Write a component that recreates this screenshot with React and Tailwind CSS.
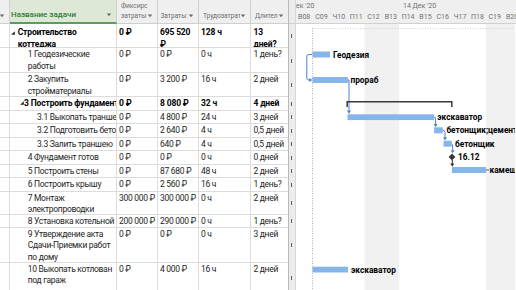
import React from "react";

const ROWS = [
  { h: "h-[24px]", pt: "pt-[3px]", bold: true, tri: "left-[1px] top-[6.5px]", ind: "pl-[7.7px]", name: ["Строительство", "коттеджа"], fixed: ["0 ₽"], cost: ["695 520", "₽"], work: ["128 ч"], dur: ["13", "дней?"] },
  { h: "h-[25px]", ind: "pl-[17.7px]", name: ["1 Геодезические", "работы"], fixed: ["0 ₽"], cost: ["0 ₽"], work: ["0 ч"], dur: ["1 день?"] },
  { h: "h-[24px]", ind: "pl-[17.7px]", name: ["2 Закупить", "стройматериалы"], fixed: ["0 ₽"], cost: ["3 200 ₽"], work: ["16 ч"], dur: ["2 дней"] },
  { h: "h-[13.5px]", bold: true, tri: "left-[10px] top-[4px]", ind: "pl-[14px]", name: ["3 Построить фундамент"], fixed: ["0 ₽"], cost: ["8 080 ₽"], work: ["32 ч"], dur: ["4 дней"] },
  { h: "h-[13.5px]", ind: "pl-[27px]", name: ["3.1 Выкопать траншею"], fixed: ["0 ₽"], cost: ["4 800 ₽"], work: ["24 ч"], dur: ["3 дней"] },
  { h: "h-[13.5px]", ind: "pl-[27px]", name: ["3.2 Подготовить бетона"], fixed: ["0 ₽"], cost: ["2 640 ₽"], work: ["4 ч"], dur: ["0,5 дней"] },
  { h: "h-[13.5px]", ind: "pl-[27px]", name: ["3.3 Залить траншею"], fixed: ["0 ₽"], cost: ["640 ₽"], work: ["4 ч"], dur: ["0,5 дней"] },
  { h: "h-[13.5px]", ind: "pl-[17.7px]", name: ["4 Фундамент готов"], fixed: ["0 ₽"], cost: ["0 ₽"], work: ["0 ч"], dur: ["0 дней"] },
  { h: "h-[13.5px]", ind: "pl-[17.7px]", name: ["5 Построить стены"], fixed: ["0 ₽"], cost: ["87 680 ₽"], work: ["48 ч"], dur: ["2 дней"] },
  { h: "h-[13.5px]", ind: "pl-[17.7px]", name: ["6 Построить крышу"], fixed: ["0 ₽"], cost: ["2 560 ₽"], work: ["16 ч"], dur: ["1 день?"] },
  { h: "h-[23px]", ind: "pl-[17.7px]", name: ["7 Монтаж", "электропроводки"], fixed: ["300 000 ₽"], cost: ["300 000 ₽"], work: ["0 ч"], dur: ["2 дней"] },
  { h: "h-[13px]", ind: "pl-[17.7px]", name: ["8 Установка котельной"], fixed: ["200 000 ₽"], cost: ["290 000 ₽"], work: ["0 ч"], dur: ["1 день?"] },
  { h: "h-[35px]", ind: "pl-[17.7px]", name: ["9 Утверждение акта", "Сдачи-Приемки работ", "по дому"], fixed: ["0 ₽"], cost: ["0 ₽"], work: ["0 ч"], dur: ["3 дней"] },
  { h: "h-[30px]", ind: "pl-[17.7px]", name: ["10 Выкопать котлован", "под гараж"], fixed: ["0 ₽"], cost: ["4 000 ₽"], work: ["16 ч"], dur: ["2 дней"] },
];

const DAYS = ["В08", "С09", "Ч10", "П11", "С12", "В13", "П14", "В15", "С16", "Ч17", "П18", "С19", "В20"];

function Arrow({ cls = "" }) {
  return (
    <svg width="6" height="4" viewBox="0 0 6 4" className={"flex-none " + cls}>
      <polygon points="0.8,0.6 5.2,0.6 3,3.2" fill="#6b6b6b" />
    </svg>
  );
}

function Lines({ lines }) {
  return lines.map((l, i) => (
    <div key={i} className="whitespace-nowrap">
      {l}
    </div>
  ));
}

function Cell({ w, children, extra = "" }) {
  return (
    <div className={"flex-none border-r border-[#dcdcdc] overflow-hidden " + w + " " + extra}>{children}</div>
  );
}

function Table() {
  return (
    <div className="w-[289px] flex-none flex flex-col border-r border-[#b9b9b9]">
      <div className="flex h-[24px] flex-none bg-[#efefef] text-[#707070] text-[6.7px] tracking-[-0.1px] leading-[9.4px]">
        <div className="w-[10px] flex-none border-r border-b border-[#cfcfcf] flex items-end pb-[5px]">
          <Arrow cls="-ml-[1px]" />
        </div>
        <div className="w-[107px] flex-none bg-[#dde8d6] border-r border-[#cfcfcf] border-b-2 border-b-[#5a9e5a] flex items-end pb-[2px] pl-[1px] pr-[4px]">
          <div className="flex-1 text-[#2f7a31] text-[8px] tracking-normal font-medium leading-[10px] whitespace-nowrap overflow-hidden">Название задачи</div>
          <Arrow cls="mb-[3px]" />
        </div>
        <div className="w-[41px] flex-none border-r border-b border-[#cfcfcf] flex flex-col justify-end pb-[2px] pl-[4px] pr-[4px] overflow-hidden">
          <div className="whitespace-nowrap">Фиксирс</div>
          <div className="flex items-center">
            <div className="flex-1 whitespace-nowrap overflow-hidden">затраты</div>
            <Arrow />
          </div>
        </div>
        <div className="w-[41px] flex-none border-r border-b border-[#cfcfcf] flex items-end pb-[2px] pl-[2.5px] pr-[4px] overflow-hidden">
          <div className="flex-1 flex items-center min-w-0">
            <div className="flex-1 whitespace-nowrap overflow-hidden">Затраты</div>
            <Arrow />
          </div>
        </div>
        <div className="w-[52px] flex-none border-r border-b border-[#cfcfcf] flex items-end pb-[2px] pl-[4px] pr-[4px] overflow-hidden">
          <div className="flex-1 flex items-center min-w-0">
            <div className="flex-1 whitespace-nowrap overflow-hidden">Трудозатраты</div>
            <Arrow />
          </div>
        </div>
        <div className="flex-1 border-b border-[#cfcfcf] flex items-end pb-[2px] pl-[4px] pr-[4px] overflow-hidden">
          <div className="flex-1 flex items-center min-w-0">
            <div className="flex-1 whitespace-nowrap overflow-hidden">Длител</div>
            <Arrow />
          </div>
        </div>
      </div>
      {ROWS.map((r, i) => (
        <div
          key={i}
          className={
            "flex flex-none border-b border-[#dcdcdc] text-[8.5px] leading-[11.5px] " +
            r.h +
            (r.bold ? " font-bold text-black tracking-[-0.15px]" : " text-[#1e1e1e] tracking-[-0.3px]")
          }
        >
          <Cell w="w-[10px]" />
          <Cell w="w-[107px]" extra={"relative " + r.ind + " " + (r.pt || "pt-[1px]")}>
            {r.tri && (
              <svg width="4" height="4" viewBox="0 0 4 4" className={"absolute " + r.tri}>
                <polygon points="3.8,0.2 3.8,3.8 0.2,3.8" fill="#222" />
              </svg>
            )}
            <Lines lines={r.name} />
          </Cell>
          <Cell w="w-[41px]" extra={"pl-[2px] " + (r.pt || "pt-[1px]")}>
            <Lines lines={r.fixed} />
          </Cell>
          <Cell w="w-[41px]" extra={"pl-[2px] " + (r.pt || "pt-[1px]")}>
            <Lines lines={r.cost} />
          </Cell>
          <Cell w="w-[52px]" extra={"pl-[2px] " + (r.pt || "pt-[1px]")}>
            <Lines lines={r.work} />
          </Cell>
          <div className={"flex-1 overflow-hidden pl-[2.5px] " + (r.pt || "pt-[1px]")}>
            <Lines lines={r.dur} />
          </div>
        </div>
      ))}
    </div>
  );
}

function Splitter() {
  return (
    <div className="w-[7px] flex-none flex flex-col bg-[#ececec] border-r border-[#d6d6d6]">
      <div className="h-[24px] flex-none border-b border-[#d0d0d0]" />
      {ROWS.map((r, i) => (
        <div key={i} className={"flex-none flex items-center " + r.h}>
          <div className="ml-[1.5px] w-[1.5px] h-[4px] bg-[#5c5c5c]" />
        </div>
      ))}
    </div>
  );
}

const BAR = "#86b5ea";
const LINE = "#4b80d2";

function Chart() {
  const lbl = "font-bold text-[8.3px] fill-black";
  return (
    <div className="flex-1 flex flex-col overflow-hidden bg-white">
      <div className="h-[24px] flex-none bg-[#efefef] border-b border-[#d0d0d0] text-[#6f6f6f] text-[7px] leading-[9px] overflow-hidden">
        <div className="flex h-[11px] items-end whitespace-nowrap">
          <div className="w-[103.5px] flex-none">ек '20</div>
          <div className="flex-none pl-[3.5px]">14 Дек '20</div>
        </div>
        <div className="flex h-[12px] items-center -ml-[0.5px] whitespace-nowrap">
          {DAYS.map((d) => (
            <div key={d} className="w-[17.33px] flex-none text-center">
              {d}
            </div>
          ))}
        </div>
      </div>
      <svg width="219" height="266" viewBox="296 24 219 266" className="flex-none font-['Roboto',sans-serif]">
        <rect x="364.5" y="24" width="34.7" height="266" fill="#f1f1f1" />
        <rect x="486" y="24" width="40" height="266" fill="#f1f1f1" />
        <line x1="312.5" y1="28" x2="312.5" y2="290" stroke="#9a9a9a" strokeWidth="0.8" strokeDasharray="1 1.5" />
        <line x1="312.5" y1="28.5" x2="516" y2="28.5" stroke="#c8c8c8" strokeWidth="0.8" strokeDasharray="1 1.5" />

        <rect x="312.5" y="51.5" width="17.5" height="6" fill={BAR} />
        <text x="333" y="57.5" className={lbl}>Геодезия</text>
        <path d="M312 54.5 H308.8 Q306.8 54.5 306.8 56.5 V78 Q306.8 80 308.8 80 H310" fill="none" stroke={LINE} strokeWidth="1" />
        <polygon points="309.3,78 312.3,80 309.3,82" fill={LINE} />

        <rect x="312.5" y="77" width="35.5" height="6" fill={BAR} />
        <text x="350.5" y="83.2" className={lbl}>прораб</text>
        <path d="M348 80 H349 V111" fill="none" stroke={LINE} strokeWidth="1" />
        <polygon points="347,110.5 351,110.5 349,114" fill={LINE} />

        <path d="M347.2 107 V101.8 H451.8 V107" fill="none" stroke="#3a3a3a" strokeWidth="1.5" />

        <rect x="347.5" y="114.3" width="86.6" height="5.8" fill={BAR} />
        <text x="437.3" y="120.2" className={lbl}>экскаватор</text>
        <path d="M434 117 Q435.6 117 435.6 119 V124" fill="none" stroke={LINE} strokeWidth="1" />
        <polygon points="433.6,124 437.6,124 435.6,127.2" fill={LINE} />

        <rect x="434.1" y="127.3" width="8.7" height="6" fill={BAR} />
        <text x="446.4" y="133.4" className={lbl}>бетонщик;цемент</text>
        <path d="M442.8 130.3 Q445 130.3 445 132.5 V137.5" fill="none" stroke={LINE} strokeWidth="1" />
        <polygon points="443,137.3 447,137.3 445,140.5" fill={LINE} />

        <rect x="443.5" y="140.7" width="8.2" height="6" fill={BAR} />
        <text x="455" y="146.7" className={lbl}>бетонщик</text>
        <path d="M451.7 143.7 Q452.6 144 452.6 146.5 V150.3" fill="none" stroke={LINE} strokeWidth="1" />
        <polygon points="450.6,150.2 454.6,150.2 452.6,153.2" fill={LINE} />

        <polygon points="452,153.6 455.4,157 452,160.4 448.6,157" fill="#3a3a3a" />
        <text x="458" y="159.8" className={lbl}>16.12</text>
        <path d="M452.3 160 V164" fill="none" stroke="#2c2c2c" strokeWidth="1" />
        <polygon points="450.3,163.6 454.3,163.6 452.3,166.8" fill="#2c2c2c" />

        <rect x="452" y="167" width="34" height="6" fill={BAR} />
        <line x1="486" y1="170" x2="489" y2="170" stroke="#3a3a3a" strokeWidth="0.8" />
        <text x="489.5" y="173" className={lbl}>камещик</text>

        <rect x="312.5" y="266.7" width="35.5" height="5.8" fill={BAR} />
        <text x="351" y="272.7" className={lbl}>экскаватор</text>
      </svg>
    </div>
  );
}

export default function App() {
  return (
    <div className="w-[516px] h-[290px] overflow-hidden flex bg-white font-['Roboto',sans-serif]">
      <Table />
      <Splitter />
      <Chart />
    </div>
  );
}
